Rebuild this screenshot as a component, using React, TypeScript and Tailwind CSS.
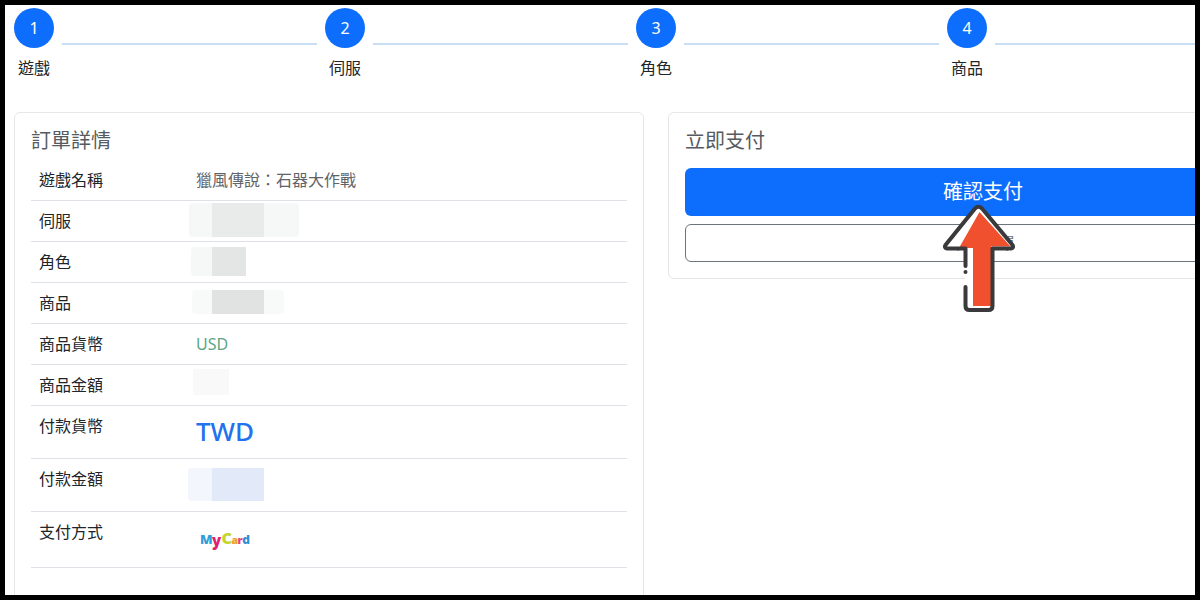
const steps = ['遊戲', '伺服', '角色', '商品']

function Step({ n, label }: { n: number; label: string }) {
  return (
    <div className="w-[311px] shrink-0">
      <div className="flex items-start">
        <div className="w-10 h-10 rounded-full bg-[#0d6efd] text-white flex items-center justify-center text-[16px] shrink-0">
          {n}
        </div>
        <div className="ml-2 mt-[35px] h-[2px] w-[255px] bg-[#c9dff3] shrink-0" />
      </div>
      <div className="ml-1 mt-[9px] text-[16px] leading-[22px] text-[#212529]">{label}</div>
    </div>
  )
}

function Row({ label, h, children }: { label: string; h: string; children?: React.ReactNode }) {
  return (
    <div className={`flex border-b border-[#dee2e6] ${h}`}>
      <div className="w-[157px] shrink-0 pl-2 pt-2 text-[16px] leading-6 text-[#212529]">{label}</div>
      <div className="flex-1 min-w-0">{children}</div>
    </div>
  )
}

function Blur({ ml, mt, h, light, dark, before, inner, after }: {
  ml: string; mt: string; h: string; light: string; dark: string; before: string; inner: string; after?: string
}) {
  return (
    <div className={`flex ${ml} ${mt} ${h}`}>
      <div className={`${before} ${light} rounded-l-sm`} />
      <div className={`${inner} ${dark}`} />
      {after && <div className={`${after} ${light} rounded-r-sm`} />}
    </div>
  )
}

// MyCard logo, real letters with the brand colours
function MyCardLogo() {
  return (
    <div className="ml-[12px] mt-[16px] flex items-baseline leading-[20px] font-black tracking-[-0.6px] [font-family:'Open_Sans',sans-serif]">
      <span className="text-[#2f9fdc] text-[13px]">M</span>
      <span className="text-[#e0206f] text-[15px] translate-y-[2px]">y</span>
      <span className="text-[#c4d52c] text-[16px] ml-[1px]">C</span>
      <span className="text-[#f0a02a] text-[11px]">a</span>
      <span className="text-[#e0407f] text-[11px]">r</span>
      <span className="text-[#2f8fd0] text-[12px]">d</span>
    </div>
  )
}

function Arrow() {
  return (
    <svg className="absolute left-[936px] top-[199px]" width="86" height="118" viewBox="936 199 86 118" fill="none">
      <path d="M978 207 L945.5 248 H965 V309 H992.5 V248 H1012.5 L983 210 Q979 205 978 207 Z" fill="#fff" />
      <path d="M979.5 212 L959 248 H973 V306 H991 V246.500 H1010.500 Z" fill="#f1502f" />
      <path
        d="M965.500 266 V248.500 H947 Q944 248 945.500 245 L975 208.500 Q978.500 205 982 208.500 L1012.500 245 Q1014 248 1011 248.500 H992.500 V306 Q992.500 310 988.500 310 H969.500 Q965.500 310 965.500 306 V287"
        stroke="#3a3a3c"
        strokeWidth="4"
        strokeLinejoin="round"
        strokeLinecap="round"
      />
      <circle cx="965.500" cy="272" r="2" fill="#3a3a3c" />
    </svg>
  )
}

export default function App() {
  return (
    <div className="relative w-[1200px] h-[600px] box-border border-[5px] border-black bg-white overflow-hidden [font-family:'Noto_Sans','Noto_Sans_CJK_TC',sans-serif]">
      <div className="w-[1400px] pl-[9px] pt-[3px]">
        <div className="flex">
          {steps.map((s, i) => (
            <Step key={s} n={i + 1} label={s} />
          ))}
        </div>

        <div className="flex items-start mt-[33px] gap-[24px]">
          {/* 訂單詳情 */}
          <div className="w-[630px] h-[520px] shrink-0 border border-[#e6e7e8] rounded-md px-4 pt-[17px]">
            <div className="text-[20px] leading-[22px] text-[#555b61]">訂單詳情</div>
            <div className="mt-2">
              <Row label="遊戲名稱" h="h-[41px]">
                <div className="pl-2 pt-2 text-[16px] leading-6 text-[#5f6468]">獵風傳說：石器大作戰</div>
              </Row>
              <Row label="伺服" h="h-[41px]">
                <Blur ml="ml-px" mt="mt-[2px]" h="h-[34px]" light="bg-[#f6f7f7]" dark="bg-[#e9eaea]" before="w-[23px]" inner="w-[52px]" after="w-[35px]" />
              </Row>
              <Row label="角色" h="h-[41px]">
                <Blur ml="ml-[3px]" mt="mt-[5px]" h="h-[29px]" light="bg-[#f6f7f7]" dark="bg-[#e4e5e5]" before="w-[21px]" inner="w-[34px]" />
              </Row>
              <Row label="商品" h="h-[41px]">
                <Blur ml="ml-[4px]" mt="mt-[7px]" h="h-[24px]" light="bg-[#f8f9f9]" dark="bg-[#e1e2e2]" before="w-[20px]" inner="w-[52px]" after="w-[20px]" />
              </Row>
              <Row label="商品貨幣" h="h-[41px]">
                <div className="pl-2 pt-2 text-[16px] leading-6 text-[#5ba585]">USD</div>
              </Row>
              <Row label="商品金額" h="h-[41px]">
                <div className="ml-[5px] mt-[4px] w-[36px] h-[26px] bg-[#f8f9f8]" />
              </Row>
              <Row label="付款貨幣" h="h-[53px]">
                <div className="pl-2 pt-[7px] text-[26px] leading-9 font-medium text-[#2271ee]">TWD</div>
              </Row>
              <Row label="付款金額" h="h-[53px]">
                <Blur ml="ml-0" mt="mt-[9px]" h="h-[33px]" light="bg-[#f3f6fc]" dark="bg-[#e2eafa]" before="w-[24px]" inner="w-[52px]" />
              </Row>
              <Row label="支付方式" h="h-[56px]">
                <MyCardLogo />
              </Row>
            </div>
          </div>

          {/* 立即支付 */}
          <div className="w-[630px] shrink-0 border border-[#e6e7e8] rounded-md px-4 pt-[17px] pb-4">
            <div className="text-[20px] leading-[22px] text-[#555b61]">立即支付</div>
            <button className="mt-4 w-[596px] h-12 rounded-md bg-[#0d6efd] text-white text-[20px] leading-[26px]">確認支付</button>
            <button className="mt-2 w-[596px] h-[38px] rounded-md border border-[#6c757d] text-[#6c757d] text-[16px]">取消訂單</button>
          </div>
        </div>
      </div>
      <div className="absolute -left-[5px] -top-[5px] w-[1200px] h-[600px] pointer-events-none">
        <Arrow />
      </div>
    </div>
  )
}
